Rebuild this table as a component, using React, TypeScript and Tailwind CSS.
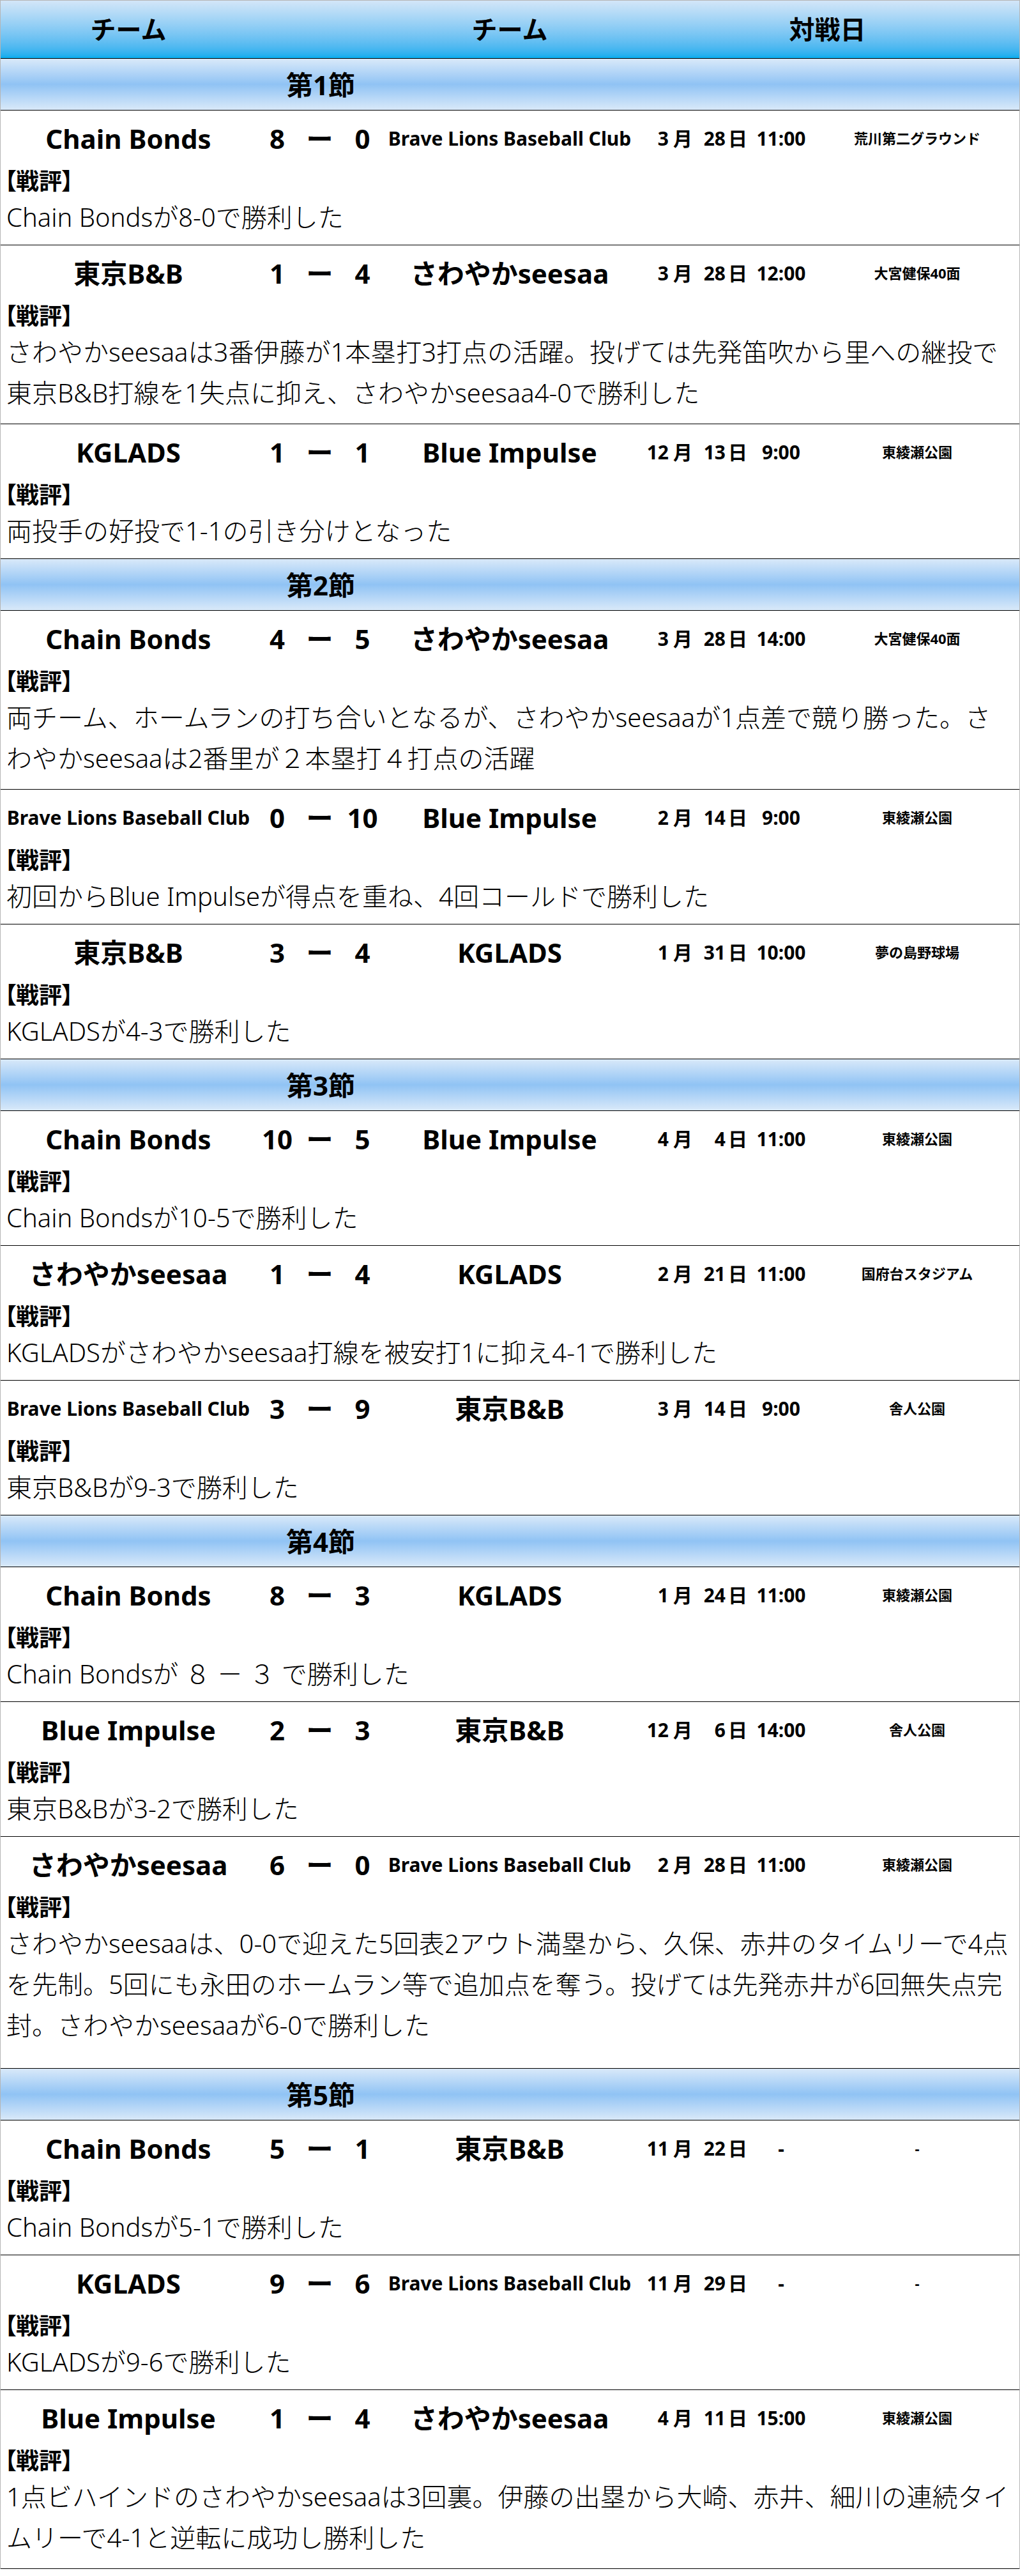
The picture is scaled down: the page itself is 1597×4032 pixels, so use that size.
type Game = {
    home: string;
    hs: string;
    as: string;
    away: string;
    m: string;
    d: string;
    t: string;
    venue: string;
    comment: string;
    lines: number;
};

const rounds: { title: string; games: Game[] }[] = [
    {
        title: "第1節",
        games: [
            { home: "Chain Bonds", hs: "8", as: "0", away: "Brave Lions Baseball Club", m: "3", d: "28", t: "11:00", venue: "荒川第二グラウンド", comment: "Chain Bondsが8-0で勝利した", lines: 1 },
            { home: "東京B&B", hs: "1", as: "4", away: "さわやかseesaa", m: "3", d: "28", t: "12:00", venue: "大宮健保40面", comment: "さわやかseesaaは3番伊藤が1本塁打3打点の活躍。投げては先発笛吹から里への継投で東京B&B打線を1失点に抑え、さわやかseesaa4-0で勝利した", lines: 2 },
            { home: "KGLADS", hs: "1", as: "1", away: "Blue Impulse", m: "12", d: "13", t: "9:00", venue: "東綾瀬公園", comment: "両投手の好投で1-1の引き分けとなった", lines: 1 },
        ],
    },
    {
        title: "第2節",
        games: [
            { home: "Chain Bonds", hs: "4", as: "5", away: "さわやかseesaa", m: "3", d: "28", t: "14:00", venue: "大宮健保40面", comment: "両チーム、ホームランの打ち合いとなるが、さわやかseesaaが1点差で競り勝った。さわやかseesaaは2番里が２本塁打４打点の活躍", lines: 2 },
            { home: "Brave Lions Baseball Club", hs: "0", as: "10", away: "Blue Impulse", m: "2", d: "14", t: "9:00", venue: "東綾瀬公園", comment: "初回からBlue Impulseが得点を重ね、4回コールドで勝利した", lines: 1 },
            { home: "東京B&B", hs: "3", as: "4", away: "KGLADS", m: "1", d: "31", t: "10:00", venue: "夢の島野球場", comment: "KGLADSが4-3で勝利した", lines: 1 },
        ],
    },
    {
        title: "第3節",
        games: [
            { home: "Chain Bonds", hs: "10", as: "5", away: "Blue Impulse", m: "4", d: "4", t: "11:00", venue: "東綾瀬公園", comment: "Chain Bondsが10-5で勝利した", lines: 1 },
            { home: "さわやかseesaa", hs: "1", as: "4", away: "KGLADS", m: "2", d: "21", t: "11:00", venue: "国府台スタジアム", comment: "KGLADSがさわやかseesaa打線を被安打1に抑え4-1で勝利した", lines: 1 },
            { home: "Brave Lions Baseball Club", hs: "3", as: "9", away: "東京B&B", m: "3", d: "14", t: "9:00", venue: "舎人公園", comment: "東京B&Bが9-3で勝利した", lines: 1 },
        ],
    },
    {
        title: "第4節",
        games: [
            { home: "Chain Bonds", hs: "8", as: "3", away: "KGLADS", m: "1", d: "24", t: "11:00", venue: "東綾瀬公園", comment: "Chain Bondsが ８ － ３ で勝利した", lines: 1 },
            { home: "Blue Impulse", hs: "2", as: "3", away: "東京B&B", m: "12", d: "6", t: "14:00", venue: "舎人公園", comment: "東京B&Bが3-2で勝利した", lines: 1 },
            { home: "さわやかseesaa", hs: "6", as: "0", away: "Brave Lions Baseball Club", m: "2", d: "28", t: "11:00", venue: "東綾瀬公園", comment: "さわやかseesaaは、0-0で迎えた5回表2アウト満塁から、久保、赤井のタイムリーで4点を先制。5回にも永田のホームラン等で追加点を奪う。投げては先発赤井が6回無失点完封。さわやかseesaaが6-0で勝利した", lines: 3 },
        ],
    },
    {
        title: "第5節",
        games: [
            { home: "Chain Bonds", hs: "5", as: "1", away: "東京B&B", m: "11", d: "22", t: "-", venue: "-", comment: "Chain Bondsが5-1で勝利した", lines: 1 },
            { home: "KGLADS", hs: "9", as: "6", away: "Brave Lions Baseball Club", m: "11", d: "29", t: "-", venue: "-", comment: "KGLADSが9-6で勝利した", lines: 1 },
            { home: "Blue Impulse", hs: "1", as: "4", away: "さわやかseesaa", m: "4", d: "11", t: "15:00", venue: "東綾瀬公園", comment: "1点ビハインドのさわやかseesaaは3回裏。伊藤の出塁から大崎、赤井、細川の連続タイムリーで4-1と逆転に成功し勝利した", lines: 2 },
        ],
    },
];

const cols = "grid grid-cols-[400px_66px_67px_67px_394px_304px_1fr]";

function Team({ name }: { name: string }) {
    const long = name.length > 16;
    return (
        <div className={`text-center font-bold whitespace-nowrap ${long ? "text-[30px]" : "text-[42px]"}`}>
            {name}
        </div>
    );
}

function GameRow({ g }: { g: Game }) {
    const pb = g.lines === 1 ? "pb-[11px]" : g.lines === 2 ? "pb-[16px]" : "pb-[35px]";
    return (
        <div className={`border-b border-black pt-[11px] ${pb}`}>
            <div className={`${cols} h-[64px] items-center`}>
                <Team name={g.home} />
                <div className="text-center text-[42px] font-bold">{g.hs}</div>
                <div className="text-center text-[42px] font-bold">ー</div>
                <div className="text-center text-[42px] font-bold">{g.as}</div>
                <Team name={g.away} />
                <div className="flex items-center text-[30px] font-bold whitespace-nowrap">
                    <span className="w-[52px] text-right">{g.m}</span>
                    <span className="ml-[7px]">月</span>
                    <span className="w-[52px] text-right">{g.d}</span>
                    <span className="ml-[4px]">日</span>
                    <span className="w-[106px] text-center">{g.t}</span>
                </div>
                <div className="text-center text-[22px] font-bold pr-[23px]">{g.venue}</div>
            </div>
            <div className="mt-[12px] h-[48px] flex items-center px-[6px] text-[36px] font-bold [font-feature-settings:'palt']">
                【戦評】
            </div>
            <p className="px-[9px] text-[40px] leading-[64px] font-light">{g.comment}</p>
        </div>
    );
}

export default function App() {
    return (
        <div className="w-[1597px] bg-white text-black border-x border-t border-[#b5b5b5] font-['Noto_Sans','Noto_Sans_CJK_JP',sans-serif]">
            <div className="grid grid-cols-[400px_200px_394px_1fr] h-[91px] items-center border-b border-black bg-linear-to-b from-[#d3e6f8] to-[#02adee] text-[40px] font-bold">
                <div className="text-center">チーム</div>
                <div />
                <div className="text-center">チーム</div>
                <div className="text-center">対戦日</div>
            </div>
            {rounds.map((r) => (
                <section key={r.title}>
                    <div className={`${cols} h-[81px] items-center border-b border-black bg-linear-to-b from-[#d9e9f9] via-[#90c3f4] to-[#d9e9f9]`}>
                        <div className="col-span-4 text-right pr-[45px] text-[42px] font-bold">{r.title}</div>
                    </div>
                    {r.games.map((g) => (
                        <GameRow key={`${r.title}-${g.home}`} g={g} />
                    ))}
                </section>
            ))}
        </div>
    );
}
